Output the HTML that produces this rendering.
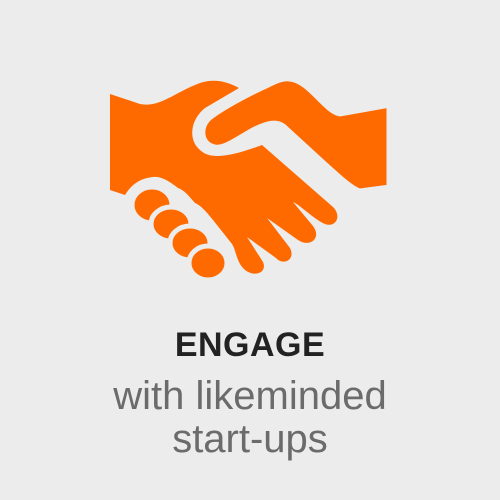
<!DOCTYPE html>
<html><head><style>
html,body{margin:0;padding:0;}
body{width:500px;height:500px;background:#ebeceb;position:relative;overflow:hidden;font-family:"Liberation Sans",sans-serif;}
.t{position:absolute;left:0;width:500px;text-align:center;white-space:nowrap;}
</style></head><body>
<svg width="500" height="500" style="position:absolute;left:0;top:0">
<g fill="#ff6a00">
<path d="M110,94 L140,104 C160,108 175,92 200,83 C215,78 228,82 239,88 L205,108 C190,120 188,140 200,150 C210,160 230,157 262,145 L333,207 C342,216 336,228 325,224 C315,220 300,205 293,202 L313,226 C322,238 310,248 298,240 L267,218 L290,248 C296,260 283,266 276,258 L247,237 L263,262 C268,274 252,278 243,268 C236,260 236,250 232,244 L213,220 C205,210 200,205 195,203 C188,195 184,190 178,188 C168,180 160,176 153,177 C143,178 133,182 125,195 L110,190 Z"/>
<path d="M290,78 C310,80 325,110 340,113 L390,104 L390,188 L360,192 C350,190 330,170 283,127 C276,122 268,124 255,130 C240,138 225,150 215,148 C200,145 198,128 208,118 C220,108 250,92 268,84 C278,79 284,77 290,78 Z" stroke="#ebeceb" stroke-width="7"/>
<g stroke="#ebeceb" stroke-width="5">
<ellipse cx="152" cy="205" rx="20" ry="18"/>
<ellipse cx="171" cy="224" rx="20" ry="17"/>
<ellipse cx="190" cy="243" rx="20" ry="17"/>
<ellipse cx="208" cy="263" rx="19" ry="17"/>
</g>
</g>
</svg>
<div class="t" style="top:326px;font-size:34px;font-weight:bold;color:#222;letter-spacing:0.5px;">ENGAGE</div>
<div class="t" style="top:374px;font-size:40px;color:#6b6b6b;">with likeminded</div>
<div class="t" style="top:417px;font-size:40px;color:#6b6b6b;">start-ups</div>
</body></html>
